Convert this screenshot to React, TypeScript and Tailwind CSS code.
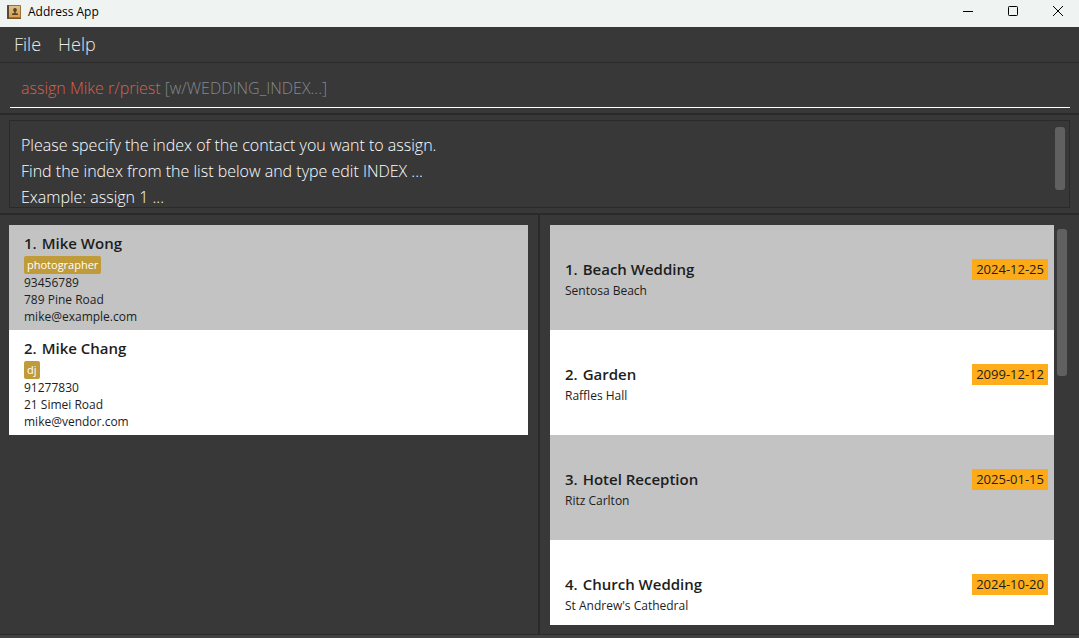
import React from "react";

type Person = {
  name: string;
  tag: string;
  phone: string;
  address: string;
  email: string;
};

type Wedding = { name: string; venue: string; date: string };

const people: Person[] = [
  { name: "Mike Wong", tag: "photographer", phone: "93456789", address: "789 Pine Road", email: "mike@example.com" },
  { name: "Mike Chang", tag: "dj", phone: "91277830", address: "21 Simei Road", email: "mike@vendor.com" },
];

const weddings: Wedding[] = [
  { name: "Beach Wedding", venue: "Sentosa Beach", date: "2024-12-25" },
  { name: "Garden", venue: "Raffles Hall", date: "2099-12-12" },
  { name: "Hotel Reception", venue: "Ritz Carlton", date: "2025-01-15" },
  { name: "Church Wedding", venue: "St Andrew's Cathedral", date: "2024-10-20" },
];

const feedback =
  "Please specify the index of the contact you want to assign.\nFind the index from the list below and type edit INDEX ...\nExample: assign 1 ...";

function BookIcon() {
  return (
    <svg width="14" height="14" viewBox="0 0 14 14" aria-hidden="true">
      <defs>
        <linearGradient id="cover" x1="0" y1="0" x2="0" y2="1">
          <stop offset="0" stopColor="#dfc08c" />
          <stop offset="1" stopColor="#d9a04a" />
        </linearGradient>
      </defs>
      <rect width="14" height="14" rx="1" fill="#9a7038" />
      <rect width="2" height="14" rx="1" fill="#5b4632" />
      <rect x="2" y="1" width="11" height="11" fill="url(#cover)" />
      <rect x="2" y="13" width="12" height="1" fill="#7a5527" />
      <path d="M8 3c1.2 0 1.8.9 1.8 1.9S9.300 6.700 8.700 7v1c.9.200 2.300.300 2.300 1v1H5V9c0-.7 1.400-.8 2.300-1V7c-.6-.3-1.100-1.100-1.100-2.100S6.800 3 8 3z" fill="#5a4528" />
    </svg>
  );
}

function TitleBar() {
  return (
    <header className="flex h-[27px] shrink-0 items-start justify-between bg-[#eff4f3] pl-[7px] text-black">
      <div className="flex h-6 items-center gap-[7px] text-[12px]">
        <BookIcon />
        <h1>Address App</h1>
      </div>
      <div className="flex gap-[5px] pr-px">
        <button aria-label="Minimize" className="flex h-[22px] w-10 items-center justify-center">
          <svg width="10" height="10" viewBox="0 0 10 10">
            <path d="M0 5.5h10" stroke="currentColor" />
          </svg>
        </button>
        <button aria-label="Maximize" className="flex h-[22px] w-10 items-center justify-center">
          <svg width="10" height="10" viewBox="0 0 10 10">
            <rect x="0.5" y="0.5" width="9" height="9" rx="0.8" fill="none" stroke="currentColor" />
          </svg>
        </button>
        <button aria-label="Close" className="flex h-[22px] w-10 items-center justify-center">
          <svg width="10" height="10" viewBox="0 0 10 10">
            <path d="M0 0l10 10M10 0L0 10" stroke="currentColor" />
          </svg>
        </button>
      </div>
    </header>
  );
}

function PersonRow({ person, index }: { person: Person; index: number }) {
  return (
    <li className="px-[15px] py-[5px] odd:bg-[#c3c3c3] even:bg-white">
      <h2 className="flex gap-[5px] text-[15px] leading-[26px] font-semibold">
        <span>{index}.</span>
        <span>{person.name}</span>
      </h2>
      <div className="flex">
        <span className="h-[18px] rounded-[2px] bg-[#c09b3a] px-[3px] text-[11px] leading-[18px] font-medium text-white">
          {person.tag}
        </span>
      </div>
      <p>{person.phone}</p>
      <p>{person.address}</p>
      <p>{person.email}</p>
    </li>
  );
}

function WeddingRow({ wedding, index }: { wedding: Wedding; index: number }) {
  return (
    <li className="flex items-start justify-between py-[31px] pr-[6px] pl-[15px] odd:bg-[#c3c3c3] even:bg-white">
      <div>
        <h2 className="flex gap-[5px] text-[15px] leading-[26px] font-semibold">
          <span>{index}.</span>
          <span>{wedding.name}</span>
        </h2>
        <p>{wedding.venue}</p>
      </div>
      <time className="mt-[3px] bg-[#ffa90f]/95 px-1 text-[13px] leading-[21px]">{wedding.date}</time>
    </li>
  );
}

export default function App() {
  return (
    <div className="flex h-screen flex-col bg-[#383838] font-['Open_Sans',sans-serif] text-[#1d1d1d]">
      <TitleBar />
      <nav className="flex h-9 shrink-0 items-center gap-[17px] border-b border-[#2a2a2a] px-[14px] text-[18px] font-light text-[#e8e8e8]">
        <button>File</button>
        <button>Help</button>
      </nav>

      <div className="shrink-0 border-b-2 border-[#2a2a2a] pt-[6px] pr-[9px] pb-[5px] pl-[10px]">
        <div className="flex h-[39px] items-center gap-1 border-b border-white px-[11px] text-[16px] font-light">
          <input
            aria-label="Command"
            defaultValue="assign Mike r/priest"
            className="[field-sizing:content] bg-transparent text-[#d9604c] outline-none"
          />
          <span className="text-[#84898d]">[w/WEDDING_INDEX...]</span>
        </div>
      </div>

      <div className="shrink-0 border-b-2 border-[#2a2a2a] px-[9px] py-[5px]">
        <div className="flex h-[88px] justify-between border border-[#2a2a2a] pr-1">
          <textarea
            aria-label="Result"
            readOnly
            value={feedback}
            className="mt-[11px] h-[75px] flex-1 resize-none overflow-hidden pl-[11px] text-[16px] leading-[26px] font-light text-white outline-none"
          />
          <div className="mt-[6px] h-[63px] w-[10px] rounded-[3px] bg-[#606060]" />
        </div>
      </div>

      <main className="grid min-h-0 flex-1 grid-cols-[538fr_2px_539fr] text-[12px] leading-[17px]">
        <section aria-label="Contacts" className="min-h-0 overflow-hidden py-[10px] pr-[10px] pl-[9px]">
          <ul>
            {people.map((p, i) => (
              <PersonRow key={p.name} person={p} index={i + 1} />
            ))}
          </ul>
        </section>
        <div className="bg-[#2a2a2a]" />
        <section aria-label="Weddings" className="flex min-h-0 gap-[3px] pt-[10px] pr-3 pb-[9px] pl-[10px]">
          <ul className="flex-1 overflow-y-auto [scrollbar-width:none]">
            {weddings.map((w, i) => (
              <WeddingRow key={w.name} wedding={w} index={i + 1} />
            ))}
          </ul>
          <div className="mt-1 h-[147px] w-[10px] rounded-[3px] bg-[#606060]" />
        </section>
      </main>
      <footer className="h-1 shrink-0 border-t border-[#2a2a2a] bg-[#424242]" />
    </div>
  );
}
